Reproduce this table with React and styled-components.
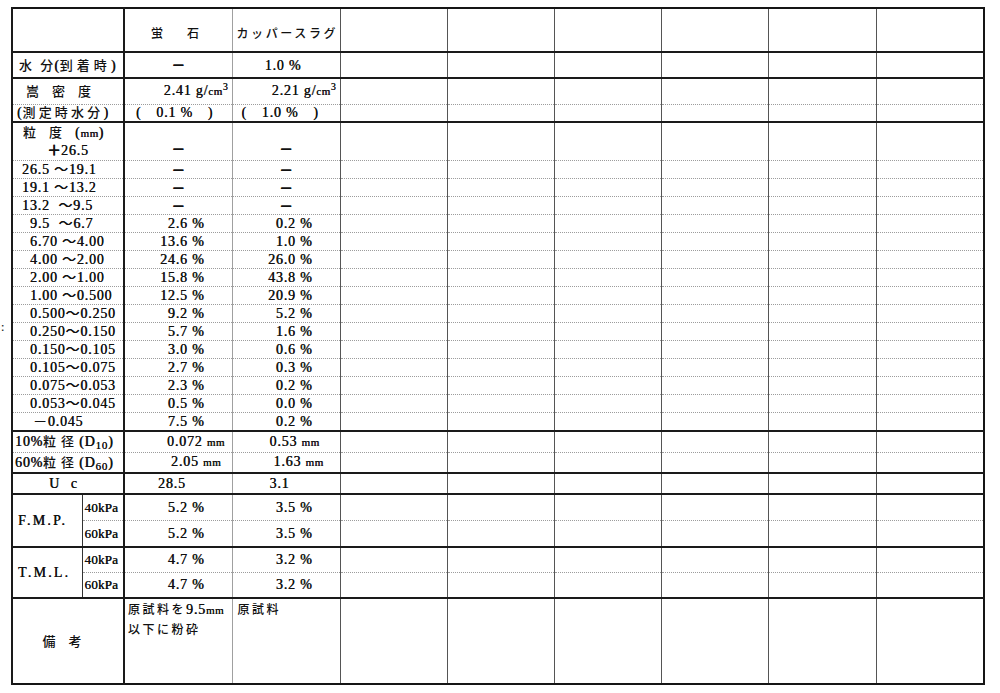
import React from "react";
import styled, { createGlobalStyle } from "styled-components";

const GlobalStyle = createGlobalStyle`
  body {
    margin: 0;
    background: #fff;
  }
`;

const lineTop = {
  none: "none",
  solid: "2px solid #1a1a1a",
  dotted: "1px dotted #9c9c9c",
};

const lineLeft = {
  heavy: "2px solid #1a1a1a",
  light: "1px solid #a0a0a0",
  mid: "1px solid #555",
  sub: "1px solid #333",
};

const Page = styled.div`
  position: relative;
  padding: 7px 0 0 11px;
  font-family: "Liberation Serif", "Noto Sans CJK JP", serif;
  color: #111;
`;

const Speck = styled.span`
  position: absolute;
  left: 1px;
  top: 322px;
  font: bold 10px "Liberation Sans", sans-serif;
  color: #333;
`;

const Sheet = styled.table`
  width: 973px;
  table-layout: fixed;
  border-collapse: collapse;
  border: 2px solid #151515;
  font-size: 14px;
  line-height: 15px;
  letter-spacing: 0.8px;
  text-shadow: 0.35px 0 0 #111;
`;

const Row = styled.tr`
  height: ${(p) => p.$h}px;
`;

const Cell = styled.td`
  padding: ${(p) => `${p.$pt || 0}px ${p.$pr || 0}px ${p.$pb || 0}px ${p.$pl || 0}px`};
  text-align: ${(p) => p.$align || "left"};
  vertical-align: ${(p) => p.$valign || "middle"};
  border-top: ${(p) => lineTop[p.$top || "none"]};
  border-left: ${(p) => lineLeft[p.$left || "mid"]};
  white-space: pre;
`;

const Jp = styled.span`
  font-family: "Noto Sans CJK JP", sans-serif;
  font-weight: 500;
  font-size: ${(p) => p.$size || 13}px;
  line-height: 1;
  letter-spacing: ${(p) => p.$ls ?? 3.5}px;
  text-shadow: none;
`;

const Dash = styled.span`
  font-family: "Noto Sans CJK JP", sans-serif;
  font-weight: 700;
  line-height: 1;
  letter-spacing: 0;
`;

const Sup = styled.sup`
  font-size: 10px;
  line-height: 0;
  vertical-align: 5px;
`;

const Sub = styled.sub`
  font-size: 11px;
  line-height: 0;
  vertical-align: -3px;
`;

const Unit = styled.span`
  font-size: 11px;
  letter-spacing: 0.5px;
`;

const Kpa = styled.span`
  font-size: 13px;
  letter-spacing: 0.2px;
`;

const Spaced = styled.span`
  font-size: 14px;
  letter-spacing: ${(p) => p.$ls}px;
`;

const LabelLine = styled.div`
  height: 18px;
  line-height: 18px;
  padding-left: ${(p) => p.$pl || 0}px;
`;

const Note = styled.div`
  line-height: 19px;
`;

const BLANKS = [0, 1, 2, 3, 4, 5];

function Blanks({ top }) {
  return BLANKS.map((i) => <Cell key={i} $top={top} />);
}

const sizeRows = [
  ["26.5 ～19.1", 9, "－", "－"],
  ["19.1 ～13.2", 9, "－", "－"],
  ["13.2  ～9.5", 9, "－", "－"],
  ["9.5  ～6.7", 17, "2.6 %", "0.2 %"],
  ["6.70 ～4.00", 17, "13.6 %", "1.0 %"],
  ["4.00 ～2.00", 17, "24.6 %", "26.0 %"],
  ["2.00 ～1.00", 17, "15.8 %", "43.8 %"],
  ["1.00 ～0.500", 17, "12.5 %", "20.9 %"],
  ["0.500～0.250", 17, "9.2 %", "5.2 %"],
  ["0.250～0.150", 17, "5.7 %", "1.6 %"],
  ["0.150～0.105", 17, "3.0 %", "0.6 %"],
  ["0.105～0.075", 17, "2.7 %", "0.3 %"],
  ["0.075～0.053", 17, "2.3 %", "0.2 %"],
  ["0.053～0.045", 17, "0.5 %", "0.0 %"],
  ["－0.045", 20, "7.5 %", "0.2 %"],
];

function Value({ v, top, left }) {
  if (v === "－") {
    return (
      <Cell $top={top} $left={left} $align="center">
        <Dash>－</Dash>
      </Cell>
    );
  }
  return (
    <Cell $top={top} $left={left} $align="right" $pr={27}>
      {v}
    </Cell>
  );
}

function PressureGroup({ name, a, b, h }) {
  return (
    <>
      <Row $h={h[0]}>
        <Cell rowSpan={2} $top="solid" $left="heavy" $pl={5}>
          <Spaced $ls={2.2}>{name}</Spaced>
        </Cell>
        <Cell $top="solid" $left="sub" $pl={2}>
          <Kpa>40kPa</Kpa>
        </Cell>
        <Value v={a} top="solid" left="heavy" />
        <Value v={b} top="solid" left="light" />
        <Blanks top="solid" />
      </Row>
      <Row $h={h[1]}>
        <Cell $top="dotted" $left="sub" $pl={2}>
          <Kpa>60kPa</Kpa>
        </Cell>
        <Value v={a} top="dotted" left="heavy" />
        <Value v={b} top="dotted" left="light" />
        <Blanks top="dotted" />
      </Row>
    </>
  );
}

export default function App() {
  return (
    <Page>
      <GlobalStyle />
      <Speck>:</Speck>
      <Sheet>
        <colgroup>
          <col style={{ width: 70 }} />
          <col style={{ width: 42 }} />
          <col style={{ width: 108 }} />
          <col style={{ width: 108 }} />
          <col style={{ width: 107 }} />
          <col style={{ width: 107 }} />
          <col style={{ width: 107 }} />
          <col style={{ width: 107 }} />
          <col style={{ width: 108 }} />
          <col style={{ width: 108 }} />
        </colgroup>
        <tbody>
          <Row $h={44}>
            <Cell colSpan={2} $left="heavy" />
            <Cell $left="heavy" $pl={26} $pt={6}>
              <Jp $size={12} $ls={0}>蛍　　石</Jp>
            </Cell>
            <Cell $left="light" $pl={4} $pt={6}>
              <Jp $size={12} $ls={2.6}>カッパースラグ</Jp>
            </Cell>
            <Blanks />
          </Row>

          <Row $h={26}>
            <Cell colSpan={2} $top="solid" $left="heavy" $pl={6}>
              <Jp $ls={4}>水</Jp> <Jp $ls={1}>分</Jp>(<Jp $ls={4}>到着時</Jp>)
            </Cell>
            <Value v="－" top="solid" left="heavy" />
            <Cell $top="solid" $left="light" $align="center" $pr={6}>
              1.0 %
            </Cell>
            <Blanks top="solid" />
          </Row>

          <Row $h={26}>
            <Cell colSpan={2} $top="solid" $left="heavy" $pl={13}>
              <Jp $ls={0}>嵩　密　度</Jp>
            </Cell>
            <Cell $top="solid" $left="heavy" $align="right" $pr={3}>
              2.41 g/<Unit>cm</Unit>
              <Sup>3</Sup>
            </Cell>
            <Cell $top="solid" $left="light" $align="right" $pr={3}>
              2.21 g/<Unit>cm</Unit>
              <Sup>3</Sup>
            </Cell>
            <Blanks top="solid" />
          </Row>

          <Row $h={18}>
            <Cell colSpan={2} $top="dotted" $left="heavy" $pl={4}>
              (<Jp $ls={3.2}>測定時水分</Jp>)
            </Cell>
            <Cell $top="dotted" $left="heavy" $pl={11}>
              (　0.1 %　)
            </Cell>
            <Cell $top="dotted" $left="light" $pl={9}>
              (　1.0 %　)
            </Cell>
            <Blanks top="dotted" />
          </Row>

          <Row $h={37}>
            <Cell colSpan={2} $top="solid" $left="heavy" $valign="top" $pt={1}>
              <LabelLine $pl={10}>
                <Jp $ls={0}>粒　度　</Jp>(<Unit>mm</Unit>)
              </LabelLine>
              <LabelLine $pl={34}>
                <Dash>＋</Dash>26.5
              </LabelLine>
            </Cell>
            <Cell $top="solid" $left="heavy" $align="center" $valign="bottom" $pb={3}>
              <Dash>－</Dash>
            </Cell>
            <Cell $top="solid" $left="light" $align="center" $valign="bottom" $pb={3}>
              <Dash>－</Dash>
            </Cell>
            <Blanks top="solid" />
          </Row>

          {sizeRows.map(([label, indent, a, b]) => (
            <Row key={label} $h={18}>
              <Cell colSpan={2} $top="dotted" $left="heavy" $pl={indent}>
                {label}
              </Cell>
              <Value v={a} top="dotted" left="heavy" />
              <Value v={b} top="dotted" left="light" />
              <Blanks top="dotted" />
            </Row>
          ))}

          <Row $h={22}>
            <Cell colSpan={2} $top="solid" $left="heavy" $pl={2}>
              10%<Jp $ls={5}>粒径</Jp>(D<Sub>10</Sub>)
            </Cell>
            <Cell $top="solid" $left="heavy" $pl={42}>
              0.072 <Unit>mm</Unit>
            </Cell>
            <Cell $top="solid" $left="light" $pl={37}>
              0.53 <Unit>mm</Unit>
            </Cell>
            <Blanks top="solid" />
          </Row>

          <Row $h={20}>
            <Cell colSpan={2} $top="dotted" $left="heavy" $pl={2}>
              60%<Jp $ls={5}>粒径</Jp>(D<Sub>60</Sub>)
            </Cell>
            <Cell $top="dotted" $left="heavy" $pl={46}>
              2.05 <Unit>mm</Unit>
            </Cell>
            <Cell $top="dotted" $left="light" $pl={41}>
              1.63 <Unit>mm</Unit>
            </Cell>
            <Blanks top="dotted" />
          </Row>

          <Row $h={21}>
            <Cell colSpan={2} $top="solid" $left="heavy" $align="center" $pr={6}>
              <Spaced $ls={4}>U c</Spaced>
            </Cell>
            <Cell $top="solid" $left="heavy" $pl={33}>
              28.5
            </Cell>
            <Cell $top="solid" $left="light" $pl={37}>
              3.1
            </Cell>
            <Blanks top="solid" />
          </Row>

          <PressureGroup name="F.M.P." a="5.2 %" b="3.5 %" h={[27, 26]} />
          <PressureGroup name="T.M.L." a="4.7 %" b="3.2 %" h={[26, 25]} />

          <Row $h={86}>
            <Cell colSpan={2} $top="solid" $left="heavy" $align="center" $pr={12} $pt={2}>
              <Jp $ls={0}>備　考</Jp>
            </Cell>
            <Cell $top="solid" $left="heavy" $valign="top" $pl={3} $pt={1}>
              <Note>
                <Jp $size={12} $ls={2.5}>原試料を</Jp>9.5<Unit>mm</Unit>
              </Note>
              <Note>
                <Jp $size={12} $ls={2.5}>以下に粉砕</Jp>
              </Note>
            </Cell>
            <Cell $top="solid" $left="light" $valign="top" $pl={5} $pt={1}>
              <Note>
                <Jp $size={12} $ls={2.5}>原試料</Jp>
              </Note>
            </Cell>
            <Blanks top="solid" />
          </Row>
        </tbody>
      </Sheet>
    </Page>
  );
}
